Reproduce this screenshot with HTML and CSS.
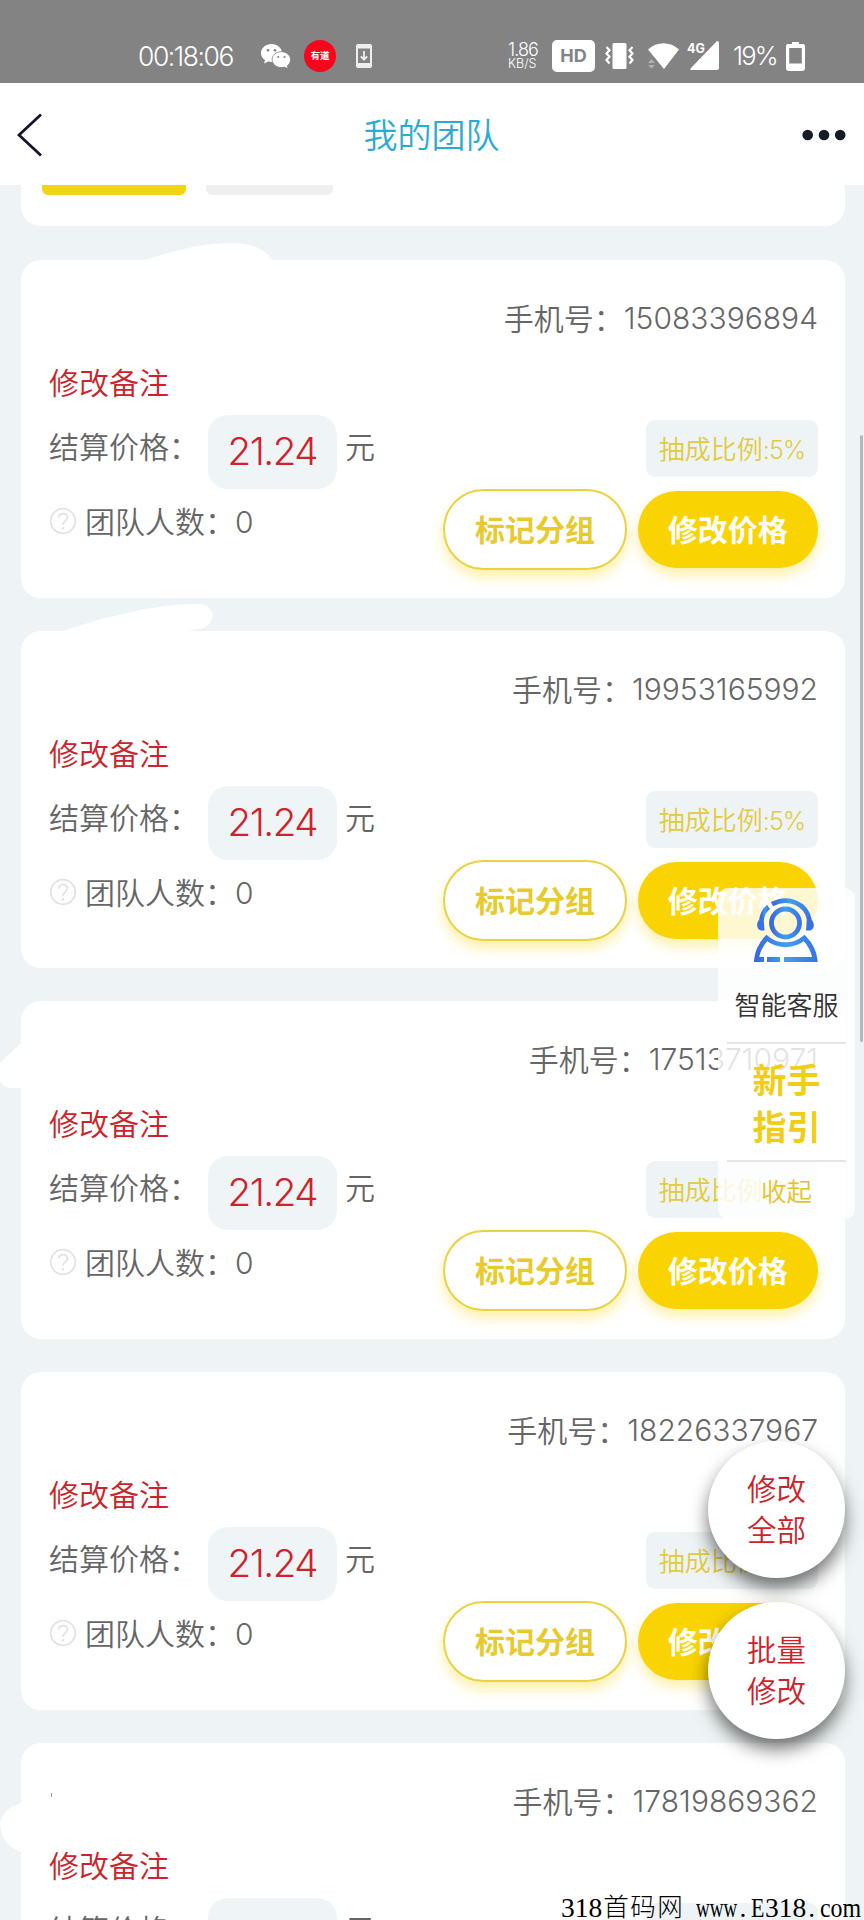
FILE: index.html
```html
<!DOCTYPE html>
<html lang="zh-CN">
<head>
<meta charset="utf-8">
<title>我的团队</title>
<link rel="stylesheet" href="styles.css">
</head>
<body>
<svg class="defs" width="0" height="0" aria-hidden="true">
  <symbol id="help" viewBox="0 0 28 28"><g fill="none" stroke="#e2e2e2" stroke-width="1.7"><circle cx="14" cy="14" r="12.3"/><path d="M9.7 10.6C10 8 11.7 6.700 14 6.700c2.500 0 4.300 1.500 4.300 3.900 0 3.200-4.300 3.400-4.300 7.200"/></g><circle cx="14" cy="21.300" r="1.300" fill="#e2e2e2"/></symbol>
</svg>
<div class="screen">
  <div class="status">
    <span class="time">00:18:06</span>
    <svg class="wechat" viewBox="0 0 30 25"><path fill="#fff" d="M10.500 0C4.700 0 0 4 0 9c0 3 1.600 5.500 4 7l-.9 3.600 4.100-2.100c1 .3 2.200.4 3.300.4C16.300 17.900 21 14 21 9S16.300 0 10.500 0z"/><path fill="#fff" stroke="#838383" stroke-width=".8" d="M20.300 7.700c-5.100 0-9.200 3.500-9.200 7.900s4.100 8 9.200 8c1.200 0 2.300-.2 3.300-.5l3.500 1.700-.8-3c2-1.500 3.200-3.700 3.200-6.200 0-4.400-4.100-7.900-9.200-7.900z"/><g fill="#838383"><circle cx="7" cy="6.300" r="1.300"/><circle cx="14" cy="6.300" r="1.300"/><circle cx="17.300" cy="13" r="1.100"/><circle cx="23.500" cy="13" r="1.100"/></g></svg>
    <span class="youdao">有道</span>
    <svg class="download" viewBox="0 0 16 24"><path fill="#eee" fill-rule="evenodd" d="M2 0h12a2 2 0 0 1 2 2v20a2 2 0 0 1-2 2H2a2 2 0 0 1-2-2V2a2 2 0 0 1 2-2zm0 4.500v14.500h12V4.500z"/><path d="M8 7v8M4.800 12.300 8 15.700l3.200-3.400" fill="none" stroke="#eee" stroke-width="1.800"/></svg>
    <span class="speed"><span class="rate">1.86</span><span class="unit">KB/S</span></span>
    <span class="hd">HD</span>
    <svg class="vibrate" viewBox="0 0 29 26"><rect x="7.500" width="14" height="26" rx="1.500" fill="#fff"/><path d="m1.500 4 3 3.200-3 3.300 3 3.300-3 3.200 3 3.500M27.500 4l-3 3.200 3 3.300-3 3.300 3 3.200-3 3.500" fill="none" stroke="#fff" stroke-width="2.200"/></svg>
    <svg class="wifi" viewBox="0 0 31 26"><path fill="#fff" d="M0 6.500C9-2 22-2 31 6.500L16 26z"/><path fill="#b0b0b0" d="m0 20 3.500-4L7 20zM0 22h7l-3.500 3.500z"/></svg>
    <svg class="signal" viewBox="0 0 32 30"><path fill="#fff" d="M30 0q2 0 2 2v25q0 2-2 2H5q-3 0-1-2z"/><text x="0" y="11.500" fill="#fff" font-family="Inter, sans-serif" font-size="12.500" font-weight="700" stroke="#838383" stroke-width="2" paint-order="stroke">4G</text></svg>
    <span class="percent">19%</span>
    <svg class="battery" viewBox="0 0 19 29"><path fill="#fff" fill-rule="evenodd" d="M6 0h7v2h4q2 0 2 2v22q0 3-3 3H3q-3 0-3-3V4q0-2 2-2h4zM3.200 6v15.500h12.600V6z"/></svg>
  </div>
  <div class="navbar">
    <svg class="back" viewBox="0 0 26 44"><path d="M24 1.500 2 22l22 20.500" fill="none" stroke="#14152a" stroke-width="2.800"/></svg>
    <h1 class="title">我的团队</h1>
    <svg class="more" viewBox="0 0 44 12"><g fill="#171a28"><circle cx="5.700" cy="6" r="5.300"/><circle cx="22" cy="6" r="5.300"/><circle cx="38.200" cy="6" r="5.300"/></g></svg>
  </div>
  <div class="summary"><span class="tab tab-on"></span><span class="tab"></span></div>
  <div class="list">
    <div class="card">
      <div class="phone">手机号：<span class="num">15083396894</span></div>
      <div class="remark">修改备注</div>
      <div class="price"><span class="label">结算价格：</span><span class="value">21.24</span><span class="yuan">元</span><span class="tag">抽成比例<span class="num">:5%</span></span></div>
      <div class="team"><svg class="help"><use href="#help"/></svg><span class="label">团队人数：<span class="num">0</span></span><span class="btn outline">标记分组</span><span class="btn solid">修改价格</span></div>
    </div>
    <div class="card">
      <div class="phone">手机号：<span class="num">19953165992</span></div>
      <div class="remark">修改备注</div>
      <div class="price"><span class="label">结算价格：</span><span class="value">21.24</span><span class="yuan">元</span><span class="tag">抽成比例<span class="num">:5%</span></span></div>
      <div class="team"><svg class="help"><use href="#help"/></svg><span class="label">团队人数：<span class="num">0</span></span><span class="btn outline">标记分组</span><span class="btn solid">修改价格</span></div>
    </div>
    <div class="card">
      <div class="phone">手机号：<span class="num">17513710971</span></div>
      <div class="remark">修改备注</div>
      <div class="price"><span class="label">结算价格：</span><span class="value">21.24</span><span class="yuan">元</span><span class="tag">抽成比例<span class="num">:5%</span></span></div>
      <div class="team"><svg class="help"><use href="#help"/></svg><span class="label">团队人数：<span class="num">0</span></span><span class="btn outline">标记分组</span><span class="btn solid">修改价格</span></div>
    </div>
    <div class="card">
      <div class="phone">手机号：<span class="num">18226337967</span></div>
      <div class="remark">修改备注</div>
      <div class="price"><span class="label">结算价格：</span><span class="value">21.24</span><span class="yuan">元</span><span class="tag">抽成比例<span class="num">:5%</span></span></div>
      <div class="team"><svg class="help"><use href="#help"/></svg><span class="label">团队人数：<span class="num">0</span></span><span class="btn outline">标记分组</span><span class="btn solid">修改价格</span></div>
    </div>
    <div class="card">
      <div class="phone">手机号：<span class="num">17819869362</span></div>
      <div class="remark">修改备注</div>
      <div class="price"><span class="label">结算价格：</span><span class="value">21.24</span><span class="yuan">元</span><span class="tag">抽成比例<span class="num">:5%</span></span></div>
    </div>
  </div>

  <svg class="brush" viewBox="0 0 864 1920"><g fill="#fff"><path d="M140 261C170 253 186 247 213 244c28-3 49 0 60 17z"/><path d="M60 632c22-7 32-11 50-15 32-8 60-13 88-13 19 0 19 22 2 25l-20 3z"/><path d="M22 1042C15 1048 10 1054 0 1063v18q5 8 14 7h8z"/><path d="M22 1803C8 1807 0 1815 0 1825c2 13 8 23 22 27z"/></g><path d="M51.500 1793v4" stroke="#999" stroke-width="1"/></svg>

  <div class="scrollbar"></div>

  <div class="service">
    <svg class="agent" viewBox="0 0 64 65"><defs><linearGradient id="blue" x1="0" y1="0" x2="1" y2="0"><stop offset="0" stop-color="#3a68e0"/><stop offset=".5" stop-color="#3da0f2"/><stop offset="1" stop-color="#3975e6"/></linearGradient></defs><g fill="none" stroke="url(#blue)" stroke-width="4.800"><circle cx="31.500" cy="25" r="14"/><path d="M18 6.200C34-2 52 5 55.500 22"/><path d="M14.500 9C9 13 8 18 7.500 22"/><path d="M10 61.500H2.500C3.500 53 7 46 12.700 40c11 9 26.500 9 37.500 0C56 46 60 53 61 61.500H30M13 61.500h13"/></g><path d="M9.500 19C2 21 1 31 7 32.500h3.500zM53 19c8 2 9 12 3 13.500h-4z" fill="#3a70e5"/></svg>
    <div class="agent-name">智能客服</div>
    <div class="guide">新手<br>指引</div>
    <div class="fold">收起</div>
  </div>

  <div class="actions"><div class="round">修改<br>全部</div><div class="round">批量<br>修改</div></div>

  <div class="mark"><span>318</span><span class="site">首码网</span><span class="www"><i>www</i></span><span class="dot">.</span><span class="caps"><i>E</i></span><span>318</span><span class="dot">.</span><span class="com"><i>com</i></span></div>
</div>
</body>
</html>
```
FILE: styles.css
```css
* { box-sizing: border-box; }
body { margin: 0; background: #eef4f5; }
.defs { position: absolute; }
.screen {
  position: relative;
  width: 864px;
  height: 1920px;
  overflow: hidden;
  background: #eef4f5;
  color: #666;
  font-family: "Noto Sans CJK SC", sans-serif;
  font-weight: 350;
  font-size: 30px;
  line-height: 42px;
  white-space: nowrap;
}
.num { font-family: Inter, sans-serif; font-weight: 300; }

.status { display: flex; align-items: center; height: 83px; padding: 29px 0 0 138px; background: #838383; color: #fff; font-family: Inter, sans-serif; font-weight: 300; line-height: 30px; }
.status > * { flex: none; }
.time { width: 96px; font-size: 26.500px; letter-spacing: -1.450px; }
.wechat { width: 30px; height: 25px; margin-left: 27px; }
.youdao { width: 32px; height: 32px; margin-left: 13px; border-radius: 50%; background: #f8051d; font: 700 9.500px/31px "Noto Sans CJK SC", sans-serif; text-align: center; }
.download { width: 16px; height: 24px; margin-left: 20px; }
.speed { display: flex; flex-direction: column; width: 33px; margin-left: 136px; }
.rate { font-size: 18px; line-height: 16px; letter-spacing: -.9px; }
.unit { font-size: 12.500px; line-height: 12px; }
.hd { width: 43px; height: 32px; margin-left: 11px; border-radius: 5px; background: #fff; color: #838383; font-size: 18px; font-weight: 700; line-height: 32px; text-align: center; }
.vibrate { width: 29px; height: 26px; margin-left: 10px; }
.wifi { width: 31px; height: 26px; margin-left: 14px; }
.signal { width: 32px; height: 30px; margin-left: 8px; }
.percent { width: 44px; margin-left: 14px; font-size: 25.500px; letter-spacing: -1.800px; }
.battery { width: 19px; height: 29px; margin-left: 9px; }

.navbar { display: flex; align-items: center; justify-content: space-between; height: 102px; padding: 2px 18px 0 17px; background: #fff; }
.back { width: 26px; height: 44px; }
.title { margin: -3px 0 0 18px; color: #2cabd0; font-size: 34px; font-weight: 350; line-height: 48px; }
.more { width: 44px; height: 12px; }

.summary { display: flex; gap: 20px; height: 41px; margin: 0 19px 0 21px; padding-left: 21px; border-radius: 0 0 20px 20px; background: #fff; }
.tab { width: 127px; height: 10px; border-radius: 0 0 6px 6px; background: #efefef; }
.tab-on { width: 144px; background: #f2d410; }

.list { display: flex; flex-direction: column; gap: 33.200px; margin: 34px 19px 0 21px; }
.card { height: 337.500px; flex: none; padding: 36px 27px 0 28px; border-radius: 20px; background: #fff; }
.phone { display: flex; justify-content: flex-end; height: 42px; }
.phone .num { position: relative; top: 1px; }
.remark { height: 42px; margin-top: 22px; color: #cc2229; }
.price { display: flex; height: 74px; margin-top: 13px; }
.price .label { width: 158.500px; padding-top: 9px; }
.value { width: 129.500px; border-radius: 20px; background: #eff4f6; color: #cf222b; font: 300 38.500px/72px Inter, sans-serif; letter-spacing: -1.500px; text-align: center; }
.yuan { margin-left: 8px; padding-top: 9px; }
.tag { width: 172px; height: 57px; margin: 5px 0 0 auto; border-radius: 9px; background: #eef4f5; color: #e2ca42; font-size: 26px; line-height: 55px; text-align: center; }
.tag .num { font-size: 25px; letter-spacing: -1px; }
.team { display: flex; align-items: flex-start; height: 81px; }
.help { width: 28px; height: 28px; margin-top: 18px; }
.team .label { margin-left: 8px; padding-top: 10px; }
.btn { border-radius: 41px; font-size: 30px; font-weight: 700; text-align: center; box-shadow: 0 7px 13px rgba(249, 212, 0, .35); }
.outline { width: 184px; height: 81px; margin-left: auto; border: 2px solid #ead247; color: #e8ca2c; line-height: 75px; background: #fff; }
.solid { width: 180.500px; height: 77px; margin: 2px 0 0 10.500px; background: #f9d302; color: #fff; line-height: 74px; }

.brush { position: absolute; inset: 0; width: 864px; height: 1920px; }
.scrollbar { position: absolute; top: 435px; left: 860px; width: 3px; height: 607px; border-radius: 2px; background: #b6b9bb; }

.service { position: absolute; top: 888px; left: 718px; width: 137px; height: 331px; padding: 10px 9px 0; border-radius: 10px; background: rgba(255, 255, 255, .82); text-align: center; }
.agent { display: block; width: 64px; height: 65px; margin-left: 27px; }
.agent-name { height: 81px; padding-top: 20px; border-bottom: 2px solid #e3e5e6; color: #333; font-size: 26px; }
.guide { height: 118px; padding-top: 11px; border-bottom: 2px solid #e3e5e6; color: #f1cd15; font-size: 34px; font-weight: 700; line-height: 47px; }
.fold { padding-top: 7px; color: #e2c528; font-size: 25.500px; }

.actions { position: absolute; top: 1441px; left: 708px; display: flex; flex-direction: column; gap: 24px; }
.round { width: 137px; height: 137px; padding-top: 26px; border-radius: 50%; background: #fff; color: #cc2229; font-size: 29.500px; line-height: 41px; text-align: center; box-shadow: 0 10px 18px rgba(0, 0, 0, .55); }

.mark { position: absolute; top: 1888px; left: 561px; display: flex; color: #000; font-family: "Liberation Serif", "Noto Sans CJK SC", serif; font-weight: 400; font-size: 27.500px; line-height: 40px; }
.mark i { display: inline-block; font-style: normal; transform-origin: left; }
.site { margin-left: 1px; font-size: 25.500px; font-weight: 300; letter-spacing: 1.500px; }
.www { width: 41.250px; margin-left: 12px; }
.www i { transform: scaleX(.69); }
.dot { width: 13.750px; padding-left: 2px; }
.caps { width: 13.750px; }
.caps i { transform: scaleX(.8); }
.com { width: 41.250px; }
.com i { transform: scaleX(.87); }
```
